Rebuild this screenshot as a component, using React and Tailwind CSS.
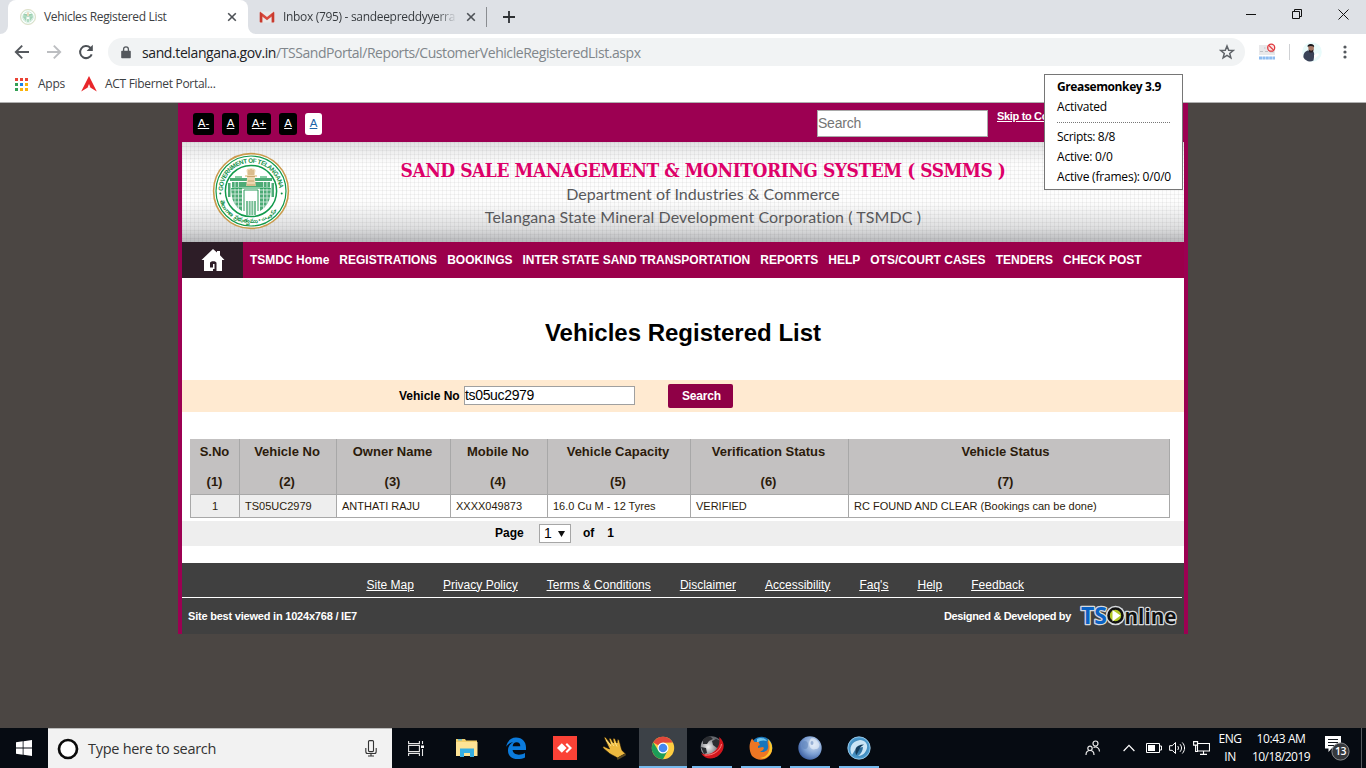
import React from 'react';

const columns = [
  { title: 'S.No', value: '1' },
  { title: 'Vehicle No', value: 'TS05UC2979' },
  { title: 'Owner Name', value: 'ANTHATI RAJU' },
  { title: 'Mobile No', value: 'XXXX049873' },
  { title: 'Vehicle Capacity', value: '16.0 Cu M - 12 Tyres' },
  { title: 'Verification Status', value: 'VERIFIED' },
  { title: 'Vehicle Status', value: 'RC FOUND AND CLEAR (Bookings can be done)' },
];

const navItems = ['TSMDC Home', 'REGISTRATIONS', 'BOOKINGS', 'INTER STATE SAND TRANSPORTATION', 'REPORTS', 'HELP', 'OTS/COURT CASES', 'TENDERS', 'CHECK POST'];
const footerLinks = ['Site Map', 'Privacy Policy', 'Terms & Conditions', 'Disclaimer', 'Accessibility', "Faq's", 'Help', 'Feedback'];

function Cross({ className }) {
  return (
    <svg className={className} viewBox="0 0 10 10" width="10" height="10" fill="none" stroke="#4d5156" strokeWidth="1.6">
      <path d="M1.2 1.2l7.6 7.6M8.8 1.2L1.2 8.8" />
    </svg>
  );
}

function Emblem({ size, id, plain }) {
  return (
    <svg width={size} height={size} viewBox="0 0 78 78" className="shrink-0">
      <defs>
        <path id={id + 't'} d="M10.800 39a28.200 28.200 0 0 1 56.400 0" />
        <path id={id + 'b'} d="M6.300 41a32.800 32.800 0 0 0 65.400 0" />
      </defs>
      <circle cx="39" cy="39" r="37.4" fill="#fff" stroke="#c99b4e" strokeWidth="1.6" />
      <circle cx="39" cy="39" r="35" fill="none" stroke="#129a4c" strokeWidth="1.2" />
      <circle cx="39" cy="39" r="25.6" fill="#fff" stroke="#129a4c" strokeWidth="1.5" />
      {!plain && (
        <g fill="#0f8f45" fontFamily="'Liberation Sans', sans-serif" fontWeight="700">
          <text fontSize="6.3" textLength="86"><textPath href={'#' + id + 't'}>GOVERNMENT OF TELANGANA</textPath></text>
          <text fontSize="5.6" fontFamily="'Noto Sans', sans-serif"><textPath href={'#' + id + 'b'} startOffset="8">తెలంగాణ ప్రభుత్వము • حکومت</textPath></text>
          <circle cx="8.3" cy="41.5" r="1" />
          <circle cx="69.7" cy="41.5" r="1" />
        </g>
      )}
      <g fill="#4dab76">
        <path d="M18 26h42v3H18zM20 30h38v5H20z" />
        <path d="M19 36h11v23c-5-3-9-8-10-14zM48 36h11l-1 9c-1 6-5 11-10 14z" />
        <path d="M16 31h2.500v14H16zM59.500 31H62v14h-2.500z" />
        <path d="M34 49h10v14H34z" opacity=".75" />
      </g>
      <g stroke="#fff" strokeWidth=".9" opacity=".75">
        <path d="M19 38h11M19 42h11M20 46h10M21 50h9M23 54h7M48 38h11M48 42h11M48 46h10M48 50h9M48 54h7M23 30v26M26.500 30v28M51.500 30v28M55 30v26M36.500 49v14M39 49v14M41.500 49v14" />
      </g>
      <path d="M32 59V38h14v21" fill="none" stroke="#2a9c5b" strokeWidth="1" />
      <path d="M20 36h38M23 25h7M48 25h7" fill="none" stroke="#129a4c" />
      <path d="M34.500 18.500c0-3 9-3 9 0l-.8 4.500H45v2h-2.200l1 9h-9.600l1-9H33v-2h2.300z" fill="#ecd6b0" />
      <path d="M37 18v5M39 17v6M41 18v5M35 24.500h8M36 29h6M35 33h8" stroke="#c2985c" strokeWidth=".8" />
    </svg>
  );
}

function BrowserChrome() {
  return (
    <header className="h-[103px] shrink-0 border-b border-[#b0b0b0] bg-white font-['Open_Sans',sans-serif]">
      <div className="flex h-[34px] bg-[#dee1e6]">
        <div className="flex w-2 items-end">
          <svg width="8" height="8" viewBox="0 0 8 8"><path d="M8 0v8H0a8 8 0 0 0 8-8" fill="#fff" /></svg>
        </div>
        <div className="flex w-[240px] items-center rounded-t-lg bg-white pl-[12px]">
          <span className="opacity-70"><Emblem size={16} id="fav" plain /></span>
          <span className="ml-2 w-[183px] whitespace-nowrap text-[12px] tracking-[-0.330px] text-[#3c4043]">Vehicles Registered List</span>
          <Cross />
        </div>
        <div className="flex w-2 items-end">
          <svg width="8" height="8" viewBox="0 0 8 8"><path d="M0 0v8h8a8 8 0 0 1-8-8" fill="#fff" /></svg>
        </div>
        <div className="flex flex-1 items-center pl-[3px]">
          <svg width="16" height="12" viewBox="0 0 16 12">
            <path d="M1 .5h14v11H1z" fill="#e9e9e9" />
            <path d="M1 .5L8 6l7-5.500v3.300L8 9.300 1 3.800z" fill="#d94a3d" />
            <path d="M.7 1.200L3.400 3v8.500H1.500a.8.8 0 0 1-.8-.8zM15.300 1.200L12.600 3v8.500h1.900a.8.8 0 0 0 .8-.8z" fill="#c93a2e" />
          </svg>
          <span className="ml-2 w-[174px] overflow-hidden whitespace-nowrap bg-linear-to-r from-[#34383c] from-88% to-[#dee1e6] bg-clip-text text-[12px] tracking-[-0.319px] text-transparent">Inbox (795) - sandeepreddyyerra</span>
          <Cross className="ml-[9px]" />
          <span className="ml-[10px] h-5 w-px bg-[#8a8d91]" />
          <svg className="ml-4" width="12" height="12" viewBox="0 0 12 12"><path d="M6 0v12M0 6h12" stroke="#2d3033" strokeWidth="1.800" /></svg>
        </div>
        <div className="flex items-start pt-[9px]">
          <svg width="126" height="11" viewBox="0 0 126 11" className="mr-[14px]" fill="none" stroke="#111" strokeWidth="1">
            <path d="M20 5.500h10" />
            <path d="M66.500 2.500h7v7h-7zM68.500 2.500v-2h7v7h-2" />
            <path d="M112.500.5l10 10M122.500.5l-10 10" />
          </svg>
        </div>
      </div>

      <div className="flex h-9 items-center">
        <svg className="ml-[14px]" width="16" height="16" viewBox="0 0 16 16" fill="none" stroke="#55595e" strokeWidth="1.900"><path d="M15 8H2.500M8.200 1.600L1.800 8l6.400 6.400" /></svg>
        <svg className="ml-4" width="16" height="16" viewBox="0 0 16 16" fill="none" stroke="#bcbec1" strokeWidth="1.900"><path d="M1 8h12.500M7.800 1.600L14.200 8l-6.400 6.400" /></svg>
        <svg className="ml-4" width="16" height="16" viewBox="0 0 16 16"><path d="M13.700 10.300A6 6 0 1 1 12.300 3.800L13.500 5" fill="none" stroke="#4d5156" strokeWidth="2" /><path d="M14.800.8v6.200H8.600z" fill="#4d5156" /></svg>
        <div className="ml-[14px] flex h-7 w-[1137px] items-center rounded-full bg-[#f1f3f4]">
          <svg className="ml-[13px]" width="10" height="13" viewBox="0 0 10 13"><path d="M1 4.800h8a.8.8 0 0 1 .8.800v5.800a.8.8 0 0 1-.8.8H1a.8.8 0 0 1-.8-.8V5.600A.8.8 0 0 1 1 4.800z" fill="#54585d" /><path d="M2.600 5V3.200a2.400 2.400 0 0 1 4.800 0V5" fill="none" stroke="#54585d" strokeWidth="1.300" /></svg>
          <span className="ml-[11px] whitespace-nowrap text-[14px] tracking-[-0.394px] text-[#202124]">sand.telangana.gov.in</span>
          <span className="whitespace-nowrap text-[14px] tracking-[-0.445px] text-[#80868b]">/TSSandPortal/Reports/CustomerVehicleRegisteredList.aspx</span>
          <svg className="mr-[10px] ml-auto" width="16" height="16" viewBox="0 0 16 16" fill="none" stroke="#5f6368" strokeWidth="1.500"><path d="M8 2l1.700 4.200 4.500.3-3.500 2.900 1.200 4.400L8 11.400l-3.900 2.400 1.200-4.400-3.500-2.900 4.500-.3z" /></svg>
        </div>
        <svg className="ml-[13px]" width="18" height="18" viewBox="0 0 18 18">
          <path d="M1 2h16v10H1z" fill="#e8e8ea" />
          <path d="M2 8.500h3M7 8.500h3M12 9h4M6 5h1.500" stroke="#bfc1c5" strokeWidth="1.200" />
          <path d="M1 15h16" stroke="#8ebcf0" strokeWidth="3" strokeDasharray="3 .4" />
          <circle cx="13.200" cy="4.700" r="3.500" fill="#fbe3e3" stroke="#e0393e" strokeWidth="1.300" /><path d="M10.800 2.400l4.800 4.800" stroke="#e0393e" strokeWidth="1.200" />
        </svg>
        <span className="ml-[13px] h-4 w-px bg-[#cfd1d4]" />
        <svg className="ml-[12px]" width="20" height="20" viewBox="0 0 20 20">
          <circle cx="10" cy="10" r="9.800" fill="#e9fbfb" />
          <path d="M1.500 15.500c-.5-3 1-6 4-7L11 9c2 2 1 6 .5 9.500-4 2-8 .5-10-3z" fill="#3a4358" />
          <path d="M6 4c0-2 6-2 6 0l-.3 4c-1 2-4 2-5 0z" fill="#a57865" /><path d="M5.500 4.800C5 1 12.500 1 12.200 5c-2-1.400-4.500-1.400-6.700-.2z" fill="#16181f" />
          <path d="M6.500 7.500c2 1.500 3.500 1.500 5 0l-.8 3H7.500z" fill="#272026" /><path d="M12 13l4-2 1 2-5 4z" fill="#fff" />
        </svg>
        <svg className="ml-[21px]" width="4" height="14" viewBox="0 0 4 14" fill="#55595e"><circle cx="2" cy="2" r="1.600" /><circle cx="2" cy="7" r="1.600" /><circle cx="2" cy="12" r="1.600" /></svg>
      </div>

      <div className="flex h-7 items-center text-[12px] text-[#3c4043]">
        <svg className="ml-[15px]" width="13" height="13" viewBox="0 0 13 13">
          <path d="M0 0h3v3H0zM5 0h3v3H5zM10 0h3v3h-3z" fill="#ea4335" />
          <path d="M0 5h3v3H0zM0 10h3v3H0z" fill="#34a055" />
          <path d="M5 5h3v3H5z" fill="#1a82e8" />
          <path d="M10 5h3v3h-3zM10 10h3v3h-3zM5 10h3v3H5z" fill="#fbb30a" />
        </svg>
        <span className="ml-[10px] w-[27px] tracking-[-0.248px]">Apps</span>
        <svg className="ml-[16px]" width="16" height="16" viewBox="0 0 16 16"><path d="M8 0l7.800 15.500L8 10.800.2 15.500z" fill="#e8262a" /><path d="M8 8l1.500 3.700L8 10.800l-1.500.9z" fill="#fff" /></svg>
        <span className="ml-[8px] whitespace-nowrap tracking-[-0.311px]">ACT Fibernet Portal...</span>
      </div>
    </header>
  );
}

function SiteHeader() {
  const chip = 'flex h-[22px] items-center justify-center rounded-[3px] bg-black text-[11.500px] text-white underline';
  return (
    <>
      <div className="flex h-[39px] items-start bg-[#9c0052]">
        <div className="mt-[10px] ml-[11px] flex gap-2">
          <span className={chip + ' w-[21px]'}>A-</span>
          <span className={chip + ' w-[17px]'}>A</span>
          <span className={chip + ' w-[24px]'}>A+</span>
          <span className={chip + ' w-[18px]'}>A</span>
          <span className="flex h-[22px] w-[17px] items-center justify-center rounded-[3px] bg-white text-[11.500px] text-[#1c64a8] underline">A</span>
        </div>
        <div className="mt-[7px] ml-[495px] flex h-[27px] w-[171px] items-center border border-[#a9a9a9] bg-white text-[14px] tracking-[-0.226px] text-[#757575]">Search</div>
        <span className="mt-[7px] ml-[9px] w-[48px] overflow-hidden whitespace-nowrap text-[11px] leading-[13px] font-bold tracking-[-0.330px] text-white underline">Skip to Co</span>
      </div>
      <div className="h-[100px] bg-[linear-gradient(to_bottom,rgba(120,122,125,0.2),rgba(255,255,255,0)_22%,rgba(255,255,255,0)_60%,rgba(140,142,146,0.28)_86%,rgba(115,117,122,0.5))] bg-[#fdfdfd]">
        <div className="flex h-full bg-[repeating-linear-gradient(to_right,rgba(0,0,0,0.045)_0px_1px,transparent_1px_4px),repeating-linear-gradient(to_bottom,rgba(0,0,0,0.045)_0px_1px,transparent_1px_4px)]">
          <div className="mt-[10px] ml-[30px]"><Emblem size={78} id="main" /></div>
          <div className="mt-[17px] ml-[110px] flex w-[606px] flex-col items-center whitespace-nowrap">
            <h1 className="font-['DejaVu_Serif_Condensed','DejaVu_Serif',serif] text-[19px] leading-[23px] font-bold tracking-[-0.469px] text-[#dd0069] [font-stretch:condensed]">SAND SALE MANAGEMENT &amp; MONITORING SYSTEM ( SSMMS )</h1>
            <p className="font-[Lato,sans-serif] text-[16px] leading-[23px] tracking-[0.054px] text-[#58585a]">Department of Industries &amp; Commerce</p>
            <p className="font-[Lato,sans-serif] text-[16px] leading-[23px] tracking-[0.091px] text-[#58585a]">Telangana State Mineral Development Corporation ( TSMDC )</p>
          </div>
        </div>
      </div>
      <nav className="flex h-9 items-center bg-[#9b004b] text-[12px] font-bold text-white">
        <div className="mr-[7px] flex h-9 w-[61px] items-center justify-center bg-[#2d1d27]">
          <svg width="24" height="22" viewBox="0 0 24 22"><path d="M12 0l4 3.500V2h3v4.200L23.500 11H21v11h-5.500v-8c0-2.500-6.500-2.500-6.500 0v4.500h3V15h1.500v5H12v2H3V11H.5z" fill="#fff" /></svg>
        </div>
        <div className="flex gap-[10px] whitespace-nowrap">{navItems.map((n) => <a key={n}>{n}</a>)}</div>
      </nav>
    </>
  );
}

function Report() {
  return (
    <main className="flex h-[285px] flex-col bg-white">
      <h2 className="mt-[41px] text-center text-[24px] leading-[28px] font-bold text-black">Vehicles Registered List</h2>
      <div className="mt-[33px] flex h-8 items-center bg-[#ffead1] text-[12px]">
        <label className="ml-[217px] w-[61px] font-bold whitespace-nowrap">Vehicle No</label>
        <div className="ml-[4px] -mt-px flex h-[19px] w-[171px] items-center border border-[#a0a0a0] bg-white text-[14px] tracking-[-0.339px]">ts05uc2979</div>
        <button className="ml-[33px] h-6 w-[65px] rounded-[2px] bg-[#8f0046] pl-[2px] text-[12px] font-bold tracking-[-0.171px] text-white">Search</button>
      </div>
      <div className="mt-[27px] ml-2 grid w-[980px] grid-cols-[50px_97px_114px_97px_143px_158px_321px]">
        {columns.map((c, i) => (
          <div key={c.title} className={'h-14 border-r border-b border-[#a8a8a8] bg-[#c3c1c1] pt-[5px] text-center text-[13px] leading-[15px] font-bold text-[#2b1b0b] ' + (i === 6 ? 'pr-[7px]' : i === 0 ? '' : 'pr-[2px]')}>
            <p>{c.title}</p>
            <p className="mt-[15px]">({i + 1})</p>
          </div>
        ))}
        {columns.map((c, i) => (
          <div key={c.value} className={'flex h-[23px] items-center border-r border-b border-[#a8a8a8] text-[11px] text-[#2b1b0b] ' + (i === 0 ? 'justify-center border-l bg-[#eee]' : i === 1 ? 'bg-[#eee] pl-[5px]' : 'pl-[5px]')}>{c.value}</div>
        ))}
      </div>
      <div className="mt-[3px] flex h-[25px] items-center bg-[#eee] pb-px text-[12px] font-bold text-black">
        <span className="ml-[313px] w-11">Page</span>
        <span className="mt-px flex h-[19px] w-8 items-center border border-[#a6a6a6] bg-white pl-[4px] text-[14px] font-normal">1
          <svg className="ml-[6px]" width="7" height="6" viewBox="0 0 7 6"><path d="M0 0h7L3.500 6z" fill="#111" /></svg>
        </span>
        <span className="ml-[12px]">of</span>
        <span className="ml-[13px]">1</span>
      </div>
    </main>
  );
}

function SiteFooter() {
  return (
    <footer className="h-[71px] bg-[#404040] text-white">
      <div className="mr-[2px] flex h-[35px] items-center gap-[29.1px] border-b border-white pt-[9px] pl-[184.500px] text-[12px] underline">
        {footerLinks.map((l) => <a key={l}>{l}</a>)}
      </div>
      <div className="flex h-9 items-center pl-[6px] text-[11px] font-bold">
        <span className="tracking-[-0.209px]">Site best viewed in 1024x768 / IE7</span>
        <span className="ml-auto tracking-[-0.352px]">Designed &amp; Developed by</span>
        <svg className="mr-[4px] ml-[7px]" width="102" height="28" viewBox="0 0 102 28">
          <g fontFamily="'Open Sans', sans-serif" fontWeight="700" fontSize="22" stroke="#d6d9dd" strokeWidth="2.600" strokeLinejoin="round" paintOrder="stroke">
            <text x="3" y="21.500" fill="#0a62c4" fontSize="23" textLength="26" lengthAdjust="spacingAndGlyphs">TS</text>
            <text x="46.500" y="21.500" fill="#111" textLength="52" lengthAdjust="spacingAndGlyphs">nline</text>
          </g>
          <circle cx="37.500" cy="13.500" r="9.800" fill="#d6d9dd" />
          <circle cx="37.500" cy="13.500" r="7" fill="#b3c927" stroke="#111" strokeWidth="2.600" />
          <path d="M34.500 8l8 5.500-8 6z" fill="#fff" />
        </svg>
      </div>
    </footer>
  );
}

function Tooltip() {
  return (
    <aside className="absolute top-[74px] left-[1044px] h-[116px] w-[139px] border border-[#767676] bg-white pt-[2px] pl-3 font-['Open_Sans',sans-serif] text-[12px] leading-5 whitespace-nowrap text-black">
      <p className="font-bold tracking-[-0.391px]">Greasemonkey 3.9</p>
      <p className="tracking-[-0.185px]">Activated</p>
      <div className="mt-[5px] mb-[4px] w-[113px] border-t border-dotted border-[#777]" />
      <p className="tracking-[-0.333px]">Scripts: 8/8</p>
      <p className="tracking-[-0.2px]">Active: 0/0</p>
      <p className="tracking-[-0.2px]">Active (frames): 0/0/0</p>
    </aside>
  );
}

const taskIcons = [
  { id: 'explorer', art: (<g><path d="M1 3h9l1 1.500h11V20H1z" fill="#f2cf6b" /><path d="M1 6h21.500v14H1z" fill="#fde395" /><path d="M3 3.800h4" stroke="#4db5d9" strokeWidth="1.200" /><path d="M5 12.500h14v8.500h-4v-4H9v4H5z" fill="#35aee2" /></g>) },
  { id: 'edge', art: (<path d="M2.200 10.800C3 5.500 6.600 1.600 12 1.600c6.500 0 10 4.600 10 9.800v2.700H8.600c.2 3.200 3 4.600 6.200 4.600 2.300 0 4.400-.6 6.200-1.700v4.500c-2 1-4.600 1.600-7.400 1.600-6 0-9.600-3.500-9.600-8.700 0-3.600 2-6.700 5.200-8.100-3.200.4-5.400 2-7 4.500zM8.700 10.200h7.600c0-2.300-1.200-3.900-3.700-3.900-2.300 0-3.700 1.600-3.900 3.900z" fill="#0b7bdc" />) },
  { id: 'anydesk', art: (<g><path d="M0 0h24v24H0z" fill="#fb4236" /><path d="M4 12l4.800-4.800 4.800 4.800-4.800 4.800z" fill="#fff" /><path d="M12.500 8.500l1.500-1.500 5 5-5 5-1.500-1.500L16 12z" fill="#fff" /></g>) },
  { id: 'hand', art: (<g><path d="M2 1.500c1-.8 2 0 2.500 1l4 5L7 3c0-1 1.500-1.200 2-.2L11.500 7 11 3c.2-1 1.600-1 2 0l2 4 .3-3c.6-.8 1.600-.5 1.900.5L18.500 9c.5 2 .8 4 2 6l3 2.500L15.500 22c-3-2-5-2.500-8-4.500L1 12c-.5-1 .5-1.800 1.500-1.300L7.500 13z" fill="#edb93f" stroke="#171006" strokeWidth=".7" /><path d="M15 22l8.500-4.500.5 1.800L15.500 24z" fill="#5c4a20" /><path d="M4 4l5 6M9 6l3 4M13 6.500l2 4" stroke="#fbe28a" strokeWidth="1" /></g>) },
  { id: 'chrome', active: true, art: (<g><circle cx="12" cy="12" r="11.200" fill="#ffcd41" /><path d="M12 12L2.300 6.400A11.200 11.200 0 0 1 21.700 6.400L12 6.800z" fill="#e1483b" /><path d="M2.300 6.400A11.200 11.200 0 0 0 12 23.200l4.600-8.500L7.300 14.500z" fill="#1d9d58" /><circle cx="12" cy="12" r="5.500" fill="#fff" /><circle cx="12" cy="12" r="4.300" fill="#4688f1" /></g>) },
  { id: 'globe', open: true, art: (<g><circle cx="11.500" cy="11" r="10.800" fill="url(#steel)" /><path d="M3 3.500l4-3 4 .5 2 2-4 2-2 3H3zM12 5l4-2 5 2v5l-4 2-4-3zM1 11l5 1 1 5-3 1z" fill="#2b2d31" /><path d="M19 1c6 4 6.500 13 0 18-5 5-14 5-18-2 5 3 11 1 15-3 3-4 4.500-8 3-13z" fill="#d3151c" /><path d="M21.500 8c-1 7-9 12-17 11" stroke="#ff8780" strokeWidth="1" fill="none" /></g>) },
  { id: 'firefox', open: true, art: (<g><circle cx="12.500" cy="11.500" r="10.800" fill="#1976bb" /><path d="M8 3c3-2 8-1 10 2-3-1-7-1-10 2z" fill="#71c6eb" /><path d="M20 5c4 4 4 10 1 14-4 6-13 6-18 1C0 15-.5 8 3 2.500L5.500 6h4L11 9l-2 1 0 2 5-1c2 1 0 4-3 4.500 5 2 9-2 8-6 0-2-1-3-0-5z" fill="#ee7623" /><path d="M18.500 2.500c6 5 6 13 1.500 17-3 2.500-6 3.500-9 2.500 9-1 12-10 7.500-19.500z" fill="#fcc72d" /></g>) },
  { id: 'moon', open: true, art: (<g><circle cx="12" cy="12" r="11.700" fill="url(#moon)" /><path d="M13 2.500c3-1 7 2 8.500 6 0 3-2 5-4 4.500-2 1-5 0-6-3-1-3 0-6 1.500-7.500z" fill="#edf3fb" opacity=".6" /><ellipse cx="7" cy="9" rx="3" ry="4" fill="#5f84bb" opacity=".6" /><ellipse cx="14" cy="7" rx="1.500" ry="2" fill="#7c9ac8" opacity=".7" /></g>) },
  { id: 'dragon', open: true, art: (<g><circle cx="12" cy="12" r="11.200" fill="url(#sea)" stroke="#a8d6f2" strokeWidth=".8" /><path d="M5 19C1 12 5 5 13 4c5 0 8 4 7 8-1 5-5 8-9 8 3-2 5-6 5-9-4 0-6 3-7 7l-1-4z" fill="#d9f0fd" opacity=".9" /><path d="M8.500 13c1-3 4-4.500 8.500-4.500-2 1.500-4 2.500-4.500 4.500l-3 6c-1.200-1.500-1.600-3.500-1-6z" fill="#123c5c" /></g>) },
];

function Taskbar() {
  return (
    <div className="flex h-10 shrink-0 bg-[#060b12] font-['Open_Sans',sans-serif]">
      <div className="flex w-12 items-center justify-center">
        <svg width="16" height="16" viewBox="0 0 16 16" fill="#fff"><path d="M0 2.200L6.700 1.300v6.300H0zM7.500 1.200L16 0v7.600H7.500zM0 8.400h6.700v6.300L0 13.800zM7.500 8.400H16V16l-8.500-1.200z" /></svg>
      </div>
      <div className="flex w-[344px] items-center border-t border-[#bbb] bg-[#f2f2f2]">
        <svg className="ml-[9px]" width="22" height="22" viewBox="0 0 22 22"><circle cx="11" cy="11" r="9" fill="#fff" stroke="#0b0b0b" strokeWidth="2.700" /></svg>
        <span className="ml-[9px] w-[200px] whitespace-nowrap text-[14.500px] tracking-[-0.280px] text-[#333]">Type here to search</span>
        <svg className="ml-[77px]" width="12" height="17" viewBox="0 0 12 17" fill="none" stroke="#333" strokeWidth="1.100"><rect x="3.500" y=".6" width="5" height="11" rx="1" /><path d="M.8 8v3.200c0 1.500.7 2.300 1.700 2.300h7c1 0 1.700-.8 1.700-2.300V8M6 13.500V16M3 16h6" /></svg>
      </div>
      <div className="flex w-[51px] items-center pl-4">
        <svg width="17" height="17" viewBox="0 0 17 17" fill="none" stroke="#e6e6e6" strokeWidth="1.100"><path d="M.6 1v2.600h10.800V1M.6 16v-2.600h10.800V16M.6 5.500h10.800v6H.6zM14.500 1v3M14.500 9v7" /><path d="M13 5.500h3v2.500h-3z" fill="#fff" stroke="none" /></svg>
      </div>
      <div className="flex gap-px">
        {taskIcons.map((t) => (
          <div key={t.id} className={'flex w-12 flex-col items-center ' + (t.active ? 'bg-[#3c4147]' : '')}>
            <svg className="mt-2 mb-[6px] shrink-0" width="24" height="24" viewBox="0 0 24 24">
              <defs>
                <radialGradient id="steel" cx=".35" cy=".5"><stop offset="0" stopColor="#f4f4f4" /><stop offset="1" stopColor="#63666c" /></radialGradient>
                <radialGradient id="moon" cx=".65" cy=".35" r=".7"><stop offset="0" stopColor="#d4e1f3" /><stop offset=".6" stopColor="#7c9fd2" /><stop offset="1" stopColor="#3f62a4" /></radialGradient>
                <radialGradient id="sea"><stop offset="0" stopColor="#245f8b" /><stop offset="1" stopColor="#4fa0d4" /></radialGradient>
              </defs>
              {t.art}
            </svg>
            <span className={'h-[2px] ' + (t.active ? 'w-12 bg-[#76b9ed]' : t.open ? 'w-10 bg-[#76b9ed]' : 'w-10')} />
          </div>
        ))}
      </div>
      <div className="ml-auto flex items-center text-[12px] leading-[18px] text-white">
        <svg width="16" height="16" viewBox="0 0 16 16" fill="none" stroke="#e8e8e8" strokeWidth="1.200"><circle cx="10.500" cy="3.500" r="2.500" /><circle cx="5" cy="8.300" r="2.200" /><path d="M1 15c0-6 8-6 8 0M8.500 7.500c3-1.500 6 .5 6 4" /></svg>
        <svg className="ml-[22px]" width="12" height="8" viewBox="0 0 12 8" fill="none" stroke="#fff" strokeWidth="1.200"><path d="M.6 7L6 1.400 11.400 7" /></svg>
        <svg className="ml-[11px]" width="16" height="10" viewBox="0 0 16 10"><path d="M.5.5h13v9H.5zM14 3h1.500v4H14" fill="none" stroke="#fff" /><path d="M2 2h7v6H2z" fill="#fff" /></svg>
        <svg className="ml-[7px]" width="17" height="14" viewBox="0 0 17 14" fill="none" stroke="#fff" strokeWidth="1"><path d="M.6 4.700h2.600L6.500 1.500v11L3.200 9.300H.6zM8.700 5c1 1.200 1 2.800 0 4M11 3.200c2 2.300 2 5.300 0 7.600M13.300 1.500c3 3.300 3 7.700 0 11" /></svg>
        <svg className="ml-[7px]" width="17" height="14" viewBox="0 0 17 14" fill="none" stroke="#fff" strokeWidth="1.100"><path d="M4.500 2.500h12v7.500h-12zM10.500 10v3M7 13.400h7M.6.6h4v3.500h-4zM2.600 4v6.500H5" /></svg>
        <div className="-mt-px ml-[7px] w-[26px] text-center text-[12px] tracking-[-0.4px]"><p>ENG</p><p>IN</p></div>
        <div className="-mt-px ml-[8px] w-[60px] text-center text-[12px] whitespace-nowrap"><p className="tracking-[-0.387px]">10:43 AM</p><p className="tracking-[-0.569px]">10/18/2019</p></div>
        <svg className="ml-[13px]" width="27" height="26" viewBox="0 0 27 26">
          <path d="M1 1h16v12.500H7.500L4.500 17v-3.500H1z" fill="#fff" /><path d="M4 4.500h10M4 7.500h10M4 10.500h6" stroke="#11161c" strokeWidth="1.100" />
          <circle cx="16.500" cy="16.500" r="8.600" fill="#36393d" stroke="#8b8d90" strokeWidth="1" />
          <text x="16.500" y="20.300" textAnchor="middle" fill="#fff" fontSize="10.500" fontFamily="'Open Sans', sans-serif" fontWeight="600" letterSpacing="-.4">13</text>
        </svg>
        <span className="mr-1 ml-[10px] h-10 w-px bg-[#55595e]" />
      </div>
    </div>
  );
}

export default function App() {
  return (
    <div className="relative flex h-[768px] w-[1366px] flex-col overflow-hidden bg-[#4b4643] font-['Liberation_Sans',Arial,sans-serif]">
      <BrowserChrome />
      <div className="flex-1">
        <div className="mx-auto w-[1010px] border-x-4 border-[#9c0052]">
          <SiteHeader />
          <Report />
          <SiteFooter />
        </div>
      </div>
      <Taskbar />
      <Tooltip />
    </div>
  );
}
